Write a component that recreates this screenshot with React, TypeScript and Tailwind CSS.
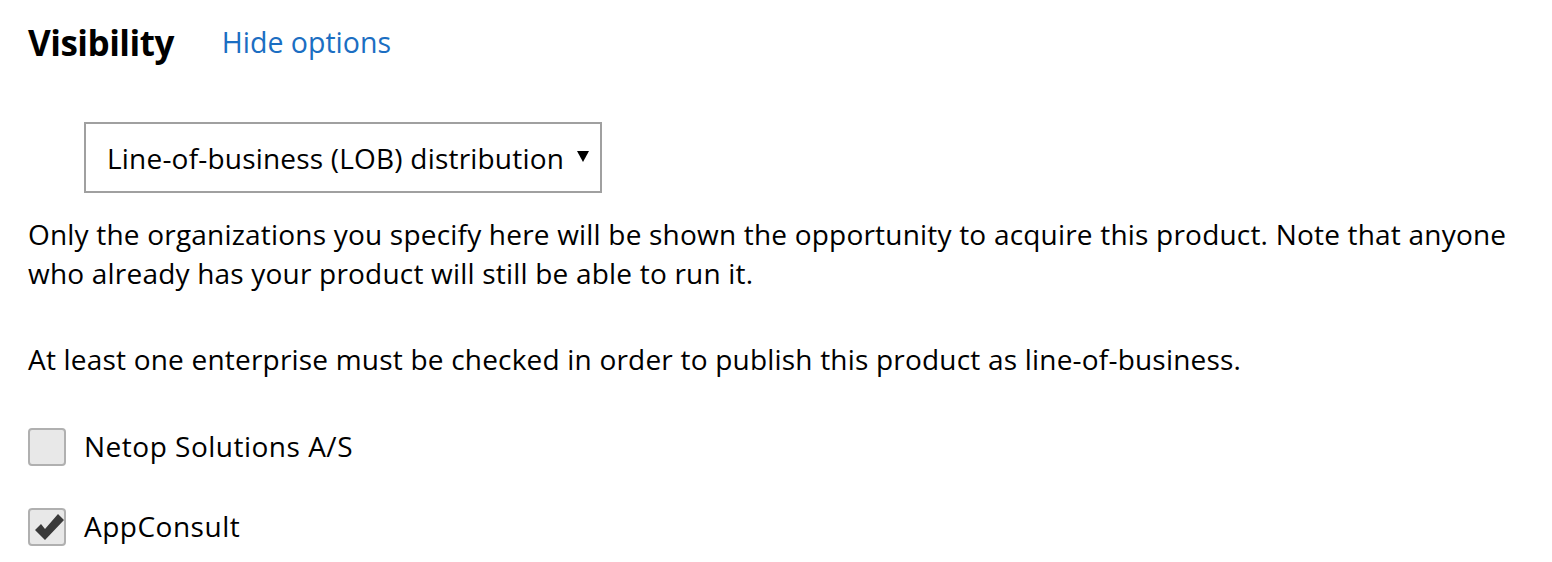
export default function App() {
  return (
    <div
      className="w-[1552px] h-[562px] overflow-hidden bg-white text-black pl-[28px]"
      style={{ fontFamily: '"Open Sans", "Noto Sans", sans-serif' }}
    >
      <div className="flex items-center h-[86px] pb-[2px]">
        <h2 className="text-[35px] font-bold tracking-[-0.5px] leading-none">Visibility</h2>
        <a className="ml-[48px] text-[28.5px] text-[#1b6ec2] leading-none">Hide options</a>
      </div>

      <div className="pl-[56px] pt-[36px]">
        <div className="w-[518px] h-[71px] border-2 border-[#a0a0a0] flex items-center justify-between pl-[21px] pr-[11px]">
          <span className="text-[28px] tracking-[0.2px]">Line-of-business (LOB) distribution</span>
          <svg width="12" height="12" viewBox="0 0 12 12" className="mt-[-4px]">
            <path d="M0 1 H12 L6 12 Z" fill="#000" />
          </svg>
        </div>
      </div>

      <p className="mt-[22px] text-[28px] tracking-[0.2px] leading-[39px] whitespace-nowrap">
        Only the organizations you specify here will be shown the opportunity to acquire this product. Note that anyone
        <br />
        who already has your product will still be able to run it.
      </p>

      <p className="mt-[47px] text-[28px] tracking-[0.2px] leading-[39px]">
        At least one enterprise must be checked in order to publish this product as line-of-business.
      </p>

      <div className="mt-[48px] flex flex-col gap-[41px]">
        <label className="flex items-center gap-[18px]">
          <span className="w-[38px] h-[38px] rounded-[4px] border-2 border-[#b0b0b0] bg-[#e8e8e8]" />
          <span className="text-[28px] tracking-[0.5px] leading-[39px]">Netop Solutions A/S</span>
        </label>
        <label className="flex items-center gap-[18px]">
          <span className="w-[38px] h-[38px] rounded-[4px] border-2 border-[#b0b0b0] bg-[#e8e8e8] relative">
            <svg width="34" height="34" viewBox="0 0 34 34" className="absolute left-[1px] top-[-1px]">
              <path d="M4 21 L10 15 L14 20 L27 5 L33 11 L14 31 Z" fill="#3a3a3a" />
            </svg>
          </span>
          <span className="text-[28px] tracking-[0.5px] leading-[39px]">AppConsult</span>
        </label>
      </div>
    </div>
  );
}
